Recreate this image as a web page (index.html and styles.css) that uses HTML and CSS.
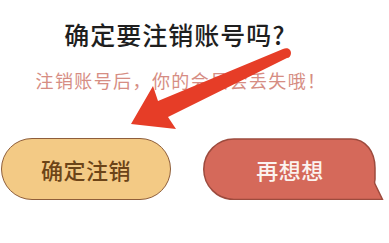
FILE: index.html
```html
<!DOCTYPE html>
<html>
	<head>
		<meta charset="utf-8">
        <title>注销账号</title>
        <link rel="stylesheet" href="styles.css">
	</head>
	<body>
        <div class="dialog">
            <h1 class="title">确定要注销账号吗?</h1>
            <p class="hint">注销账号后，你的会员会丢失哦！</p>
            <div class="actions">
                <button class="btn btn-confirm">确定注销</button>
                <button class="btn btn-cancel">
                    <svg class="bubble" width="182" height="63" viewBox="0 0 182 63">
                        <path d="M31,1 H148 C163,1 172,14 172,30 L172,41 C172,43 171,44 172,46 L179.5,61.5 H31 A30.25,30.25 0 0 1 31,1 Z" fill="#d5695a" stroke="#9d4b3e" stroke-width="1.5"/>
                    </svg>
                    <span>再想想</span>
                </button>
            </div>
        </div>

        <!-- red hint arrow drawn over the dialog -->
        <svg class="arrow" width="389" height="243" viewBox="0 0 389 243">
            <path d="M283,49 C287,47 291,49 291,53 C291,56 289,58 287,58 L168,117 L176,129 L131,124 L153,86 L158,101 Z" fill="#e63d27"/>
        </svg>
	</body>
</html>
```

FILE: styles.css
```css
body{
    margin: 0;
    background-color: #ffffff;
    font-family: "Noto Sans CJK SC", "Noto Sans", sans-serif;
}
.dialog
{
    width: 350px;
    padding-top: 19px;
    display: flex;
    flex-direction: column;
    align-items: center;
}
.title{
    margin: 0;
    font-size: 25px;
    line-height: 30px;
    font-weight: 500;
    letter-spacing: 1px;
    color: #1f1f1f;
}
.hint{
    margin: 19px 0 0 12px;
    font-size: 18px;
    line-height: 24px;
    letter-spacing: 1.4px;
    color: #d68d83;
}
.actions{
    align-self: flex-start;
    width: 389px;
    margin-top: 46px;
    display: flex;
    flex-direction: row;
    gap: 32px;
    padding-left: 1px;
}
.btn{
    flex-shrink: 0;
    font-family: "Noto Sans CJK SC", "Noto Sans", sans-serif;
    font-size: 22px;
    font-weight: 500;
    line-height: 30px;
    padding: 0;
    height: 62px;
    display: flex;
    align-items: center;
    justify-content: center;
    letter-spacing: 0.5px;
}
.btn-confirm{
    width: 170px;
    background: #f3ca85;
    color: #6c4418;
    border: 1.5px solid #8e5e3b;
    border-radius: 31px;
}
.btn-cancel{
    position: relative;
    width: 182px;
    background: none;
    border: none;
    color: #fbf3ef;
    padding-right: 8px;
}
.bubble{
    position: absolute;
    left: 0;
    top: 0;
}
.btn-cancel span{
    position: relative;
}
.arrow{
    position: absolute;
    left: 0;
    top: 0;
    pointer-events: none;
}
```
